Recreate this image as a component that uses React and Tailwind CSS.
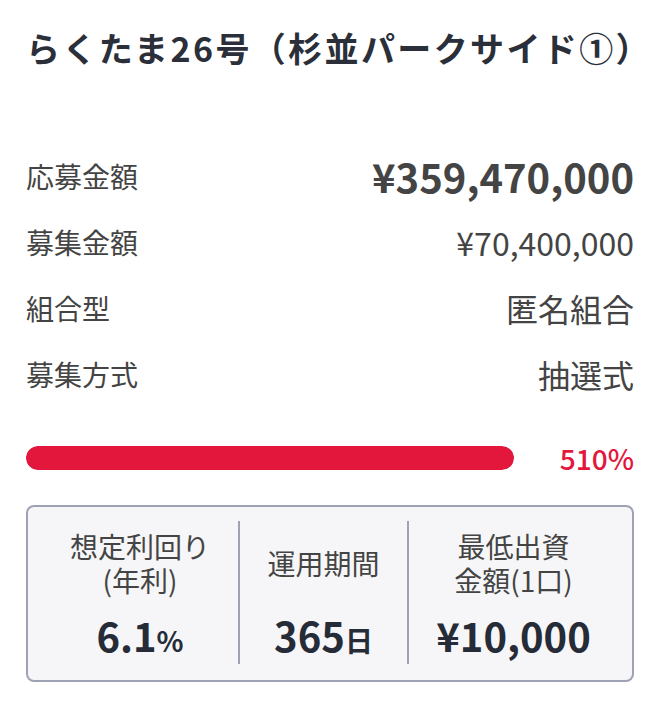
import React from "react";

const rows = [
  { label: "募集金額", value: "¥70,400,000" },
  { label: "組合型", value: "匿名組合" },
  { label: "募集方式", value: "抽選式" },
];

export default function App() {
  const rate = 510;

  return (
    <div
      className="min-h-screen bg-white px-[26px] pt-[24px]"
      style={{ fontFamily: '"Noto Sans CJK JP", "Noto Sans", sans-serif' }}
    >
      {/* Title */}
      <h1 className="text-[34px] font-bold leading-[48px] tracking-[0.07em] text-[#2a2f39] whitespace-nowrap">
        らくたま26号（杉並パークサイド①）
      </h1>

      {/* Summary rows */}
      <div className="mt-[80px]">
        <div className="flex items-center justify-between h-[48px]">
          <span className="text-[28px] text-[#444]">応募金額</span>
          <span className="text-[40px] font-bold text-[#444]">¥359,470,000</span>
        </div>
        {rows.map((row) => (
          <div key={row.label} className="flex items-center justify-between h-[48px] mt-[18px]">
            <span className="text-[28px] text-[#444]">{row.label}</span>
            <span className="text-[32px] text-[#444]">{row.value}</span>
          </div>
        ))}
      </div>

      {/* Progress */}
      <div className="flex items-center justify-between h-[36px] mt-[42px]">
        <div className="w-[488px] h-[24px] rounded-full bg-[#e5e7eb] overflow-hidden">
          <div
            className="h-full rounded-full bg-[#e3163b]"
            style={{ width: `${Math.min(rate, 100)}%` }}
          />
        </div>
        <span className="text-[28px] font-medium text-[#e3163b]">{rate}%</span>
      </div>

      {/* Key figures */}
      <div className="mt-[29px] flex rounded-[8px] border-2 border-[#9ea2b4] bg-[#f6f6f8] px-[14px] pt-[14px] pb-[16px]">
        <div className="w-[196px] flex flex-col items-center pt-[8px]">
          <div className="h-[68px] flex items-center text-center text-[28px] leading-[34px] text-[#444]">
            <p>
              想定利回り
              <br />
              (年利)
            </p>
          </div>
          <div className="mt-[14px] text-[40px] font-bold leading-[48px] text-[#252b37]">
            6.1<span className="text-[28px]">%</span>
          </div>
        </div>
        <div className="w-[2px] bg-[#9ea2b4]" />
        <div className="w-[167px] flex flex-col items-center pt-[8px]">
          <div className="h-[68px] flex items-center text-center text-[28px] leading-[34px] text-[#444]">
            <p>運用期間</p>
          </div>
          <div className="mt-[14px] text-[40px] font-bold leading-[48px] text-[#252b37]">
            365<span className="text-[28px]">日</span>
          </div>
        </div>
        <div className="w-[2px] bg-[#9ea2b4]" />
        <div className="flex-1 flex flex-col items-center pt-[8px] pb-[2px]">
          <div className="h-[68px] flex items-center text-center text-[28px] leading-[34px] text-[#444]">
            <p>
              最低出資
              <br />
              金額(1口)
            </p>
          </div>
          <div className="mt-[14px] text-[40px] font-bold leading-[48px] text-[#252b37]">
            ¥10,000
          </div>
        </div>
      </div>
    </div>
  );
}
